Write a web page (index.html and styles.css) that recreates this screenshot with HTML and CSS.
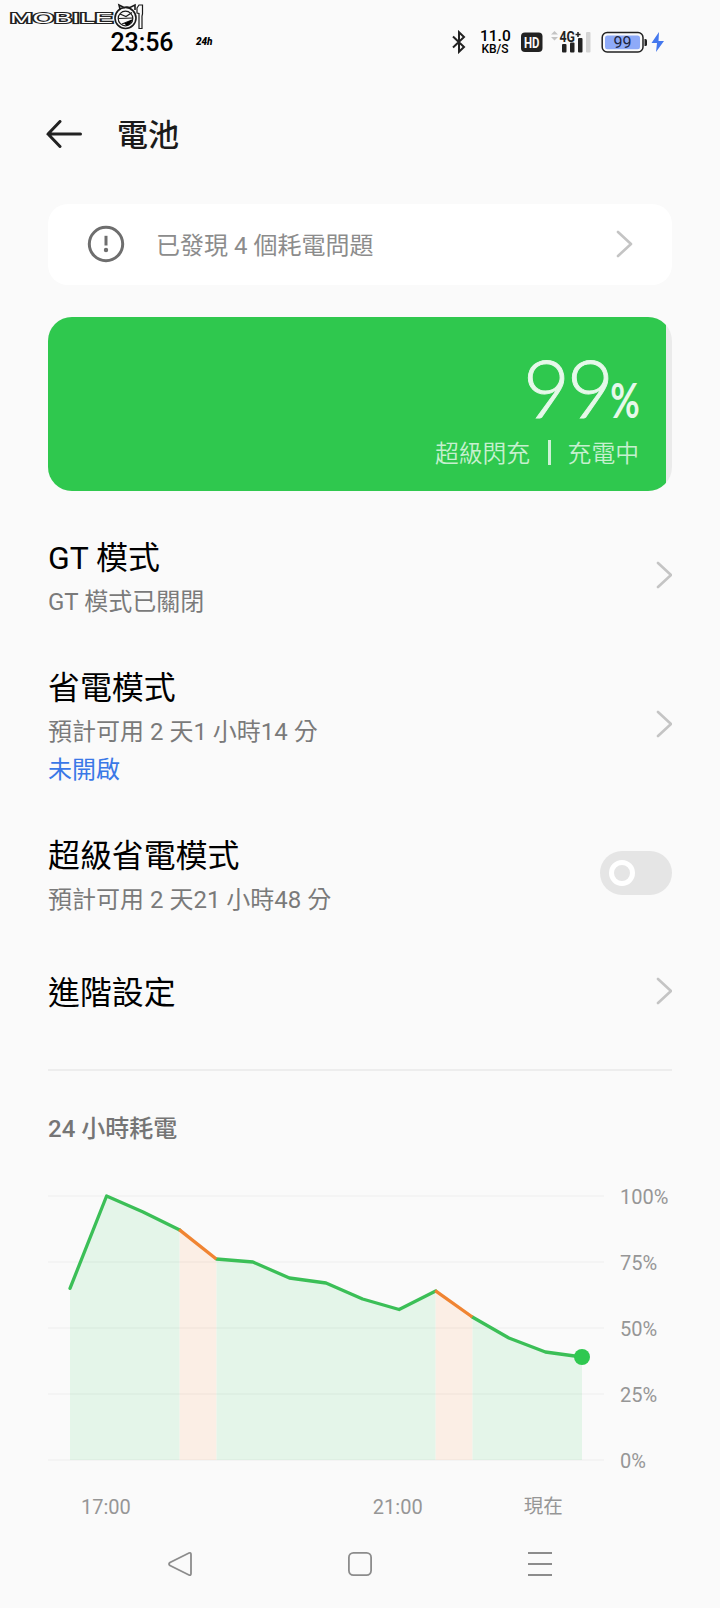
FILE: index.html
```
<!DOCTYPE html>
<html lang="zh-Hant">
<head>
<meta charset="utf-8">
<title>電池</title>
<link rel="stylesheet" href="styles.css">
</head>
<body>
<div class="screen">
  <svg class="watermark" width="150" height="34" viewBox="0 0 150 34">
    <text class="watermark-text" x="10" y="23" textLength="103" lengthAdjust="spacingAndGlyphs">MOBILE</text>
    <path class="wm-line" d="M120 9 L119 5 L124 7.500 Q127 6.500 130 7.500 L135 5 L135 10"/>
    <circle class="wm-line" cx="125.500" cy="18" r="10.500"/>
    <circle class="wm-line thin" cx="125.500" cy="18.500" r="7.300"/>
    <path class="wm-line thin" d="M120 14 L126 16.500 L132 12.500 M118.500 18.500 L133 18 M122 24 L132 20"/>
    <path d="M124 23.500 L132.500 19.500 Q130 25.500 126.500 25.500 Z"/>
    <path class="wm-line thin" d="M137 8 L139 5 L142.500 5 V14 L142 16 V28.500 L139 28.500 V13.500 L137 13 Z"/>
  </svg>

  <header class="status">
    <div class="status-left">
      <span class="clock">23:56</span>
      <span class="day">24h</span>
    </div>
    <div class="status-right">
      <svg class="bt" width="14" height="24" viewBox="0 0 14 24"><path d="M1 6.500 L12 17 L7 21.800 V2.200 L12 7 L1 17.500"/></svg>
      <div class="speed"><span class="speed-num">11.0</span><span class="speed-unit">KB/S</span></div>
      <svg class="hd" width="22" height="24" viewBox="0 0 22 24"><rect y="2.500" width="21.500" height="19.500" rx="4" fill="#222"/><text x="3" y="17.500" textLength="15.500" lengthAdjust="spacingAndGlyphs">HD</text></svg>
      <svg class="signal" width="42" height="24" viewBox="0 0 42 24">
        <path fill="#c4c4c4" d="M0 4.500 L3.500 1 L7 4.500 Z M0 7 L7 7 L3.500 10.500 Z"/>
        <text class="net" x="8.500" y="11.500" textLength="15.500" lengthAdjust="spacingAndGlyphs">4G</text>
        <path stroke="#222" stroke-width="1.500" d="M24.500 4.500 H29.500 M27 2 V7"/>
        <g fill="#222"><rect x="11" y="14" width="4.500" height="8.500" rx="1"/><rect x="19" y="12.500" width="4.500" height="10" rx="1"/><rect x="27" y="8" width="4.500" height="14.500" rx="1"/></g>
        <rect x="35" y="2" width="4.500" height="20.500" rx="1" fill="#d4d4d4"/>
      </svg>
      <svg class="batt" width="64" height="24" viewBox="0 0 64 24">
        <rect x="1.200" y="2.600" width="40.800" height="19.400" rx="5" fill="#fafafa" stroke="#222" stroke-width="1.500"/>
        <rect x="4" y="5.400" width="35" height="13.800" rx="2.500" fill="#8eaaf8"/>
        <path d="M43.500 9 H44.500 Q46 9 46 10.500 V14.500 Q46 16 44.500 16 H43.500 Z" fill="#222"/>
        <text class="batt-num" x="21.600" y="18" text-anchor="middle">99</text>
        <path d="M58 2 L50.500 13 H56 L55 22 L63 11 H57.500 Z" fill="#4478ee"/>
      </svg>
    </div>
  </header>

  <div class="titlebar">
    <svg width="36" height="28" viewBox="0 0 36 28"><path d="M34.500 14 H2 M14 1.500 L2 14 L14 26.500"/></svg>
    <h1>電池</h1>
  </div>

  <main>
    <section class="issue">
      <svg class="warn" width="38" height="38" viewBox="0 0 38 38"><circle cx="19" cy="19" r="16.700"/><path d="M19 10.800 V20.500"/><circle class="dot" cx="19" cy="25" r="2.200"/></svg>
      <span class="issue-text">已發現 4 個耗電問題</span>
      <svg class="chev" width="17" height="28" viewBox="0 0 17 28"><path d="M2 2 L15 14 L2 26"/></svg>
    </section>

    <section class="level">
      <div class="fill" style="width:618px"></div>
      <div class="level-info">
        <div class="percent"><span class="num">99</span><span class="sign">%</span></div>
        <div class="charge"><span>超級閃充</span><i></i><span>充電中</span></div>
      </div>
    </section>

    <ul class="list">
      <li class="row">
        <div><h2>GT 模式</h2><p>GT 模式已關閉</p></div>
        <svg class="chev" width="16" height="28" viewBox="0 0 16 28"><path d="M2 2 L15 14 L2 26"/></svg>
      </li>
      <li class="row">
        <div><h2>省電模式</h2><p>預計可用 2 天1 小時14 分</p><p class="link">未開啟</p></div>
        <svg class="chev" width="16" height="28" viewBox="0 0 16 28"><path d="M2 2 L15 14 L2 26"/></svg>
      </li>
      <li class="row">
        <div><h2>超級省電模式</h2><p>預計可用 2 天21 小時48 分</p></div>
        <span class="toggle"><b></b></span>
      </li>
      <li class="row last">
        <div><h2>進階設定</h2></div>
        <svg class="chev" width="16" height="28" viewBox="0 0 16 28"><path d="M2 2 L15 14 L2 26"/></svg>
      </li>
    </ul>

    <section class="usage">
      <h3>24 小時耗電</h3>
      <div class="chart">
        <div class="plot">
          <svg width="558" height="284" viewBox="48 1186 558 284">
            <g fill="#e4f5e9">
              <path d="M70 1460 V1288.400 L106.600 1196 L143.100 1212 L179.700 1230 V1460 Z"/>
              <path d="M216.300 1460 V1259 L252.900 1262 L289.400 1278 L326 1283 L362.600 1299 L399.100 1309.500 L435.700 1291 V1460 Z"/>
              <path d="M472.300 1460 V1317 L508.900 1338 L545.400 1352 L582 1357 V1460 Z"/>
            </g>
            <g fill="#fbeee5">
              <path d="M179.700 1460 V1230 L216.300 1259 V1460 Z"/>
              <path d="M435.700 1460 V1291 L472.300 1317 V1460 Z"/>
            </g>
            <path d="M48 1196 H604 M48 1262 H604 M48 1328 H604 M48 1394 H604 M48 1460 H604" stroke="#000" stroke-opacity=".03" stroke-width="1.500"/>
            <g fill="none" stroke="#3bbf57" stroke-width="3.300" stroke-linecap="round" stroke-linejoin="round">
              <path d="M70 1288.400 L106.600 1196 L143.100 1212 L179.700 1230"/>
              <path d="M216.300 1259 L252.900 1262 L289.400 1278 L326 1283 L362.600 1299 L399.100 1309.500 L435.700 1291"/>
              <path d="M472.300 1317 L508.900 1338 L545.400 1352 L582 1357"/>
              <path stroke="#f08432" stroke-linecap="butt" d="M179.200 1229.600 L216.300 1259 M435.200 1290.600 L472.300 1317"/>
            </g>
            <circle cx="582" cy="1357" r="8" fill="#2fc850"/>
          </svg>
          <div class="ylabels"><span>100%</span><span>75%</span><span>50%</span><span>25%</span><span>0%</span></div>
        </div>
        <div class="xlabels"><span>17:00</span><span>21:00</span><span class="now">現在</span></div>
      </div>
    </section>
  </main>

  <nav class="nav">
    <svg width="26" height="26" viewBox="0 0 26 26"><path d="M22 2 Q24 1.200 24 3.500 V22.500 Q24 24.800 22 24 L3 14.500 Q1 13 3 11.500 Z"/></svg>
    <svg width="26" height="26" viewBox="0 0 26 26"><rect x="1.900" y="1.900" width="22.200" height="22.200" rx="4.500"/></svg>
    <svg width="26" height="26" viewBox="0 0 26 26"><path class="bars" d="M1 2 H25 M1 13 H25 M1 24 H25"/></svg>
  </nav>
</div>
</body>
</html>
```
FILE: styles.css
```
* { box-sizing: border-box; margin: 0; padding: 0; }
body { background: #fafafa; font-family: Roboto, "Noto Sans CJK TC", sans-serif; color: #000; }
svg { display: block; flex: none; }
.screen { position: relative; width: 720px; height: 1608px; overflow: hidden; display: flex; flex-direction: column; }
.screen > * { flex: none; }

.watermark { position: absolute; left: 0; top: 0; overflow: visible; }
.watermark-text { font: 400 14px "Liberation Sans", sans-serif; fill: #fff; stroke: #222; stroke-width: 2.200; paint-order: stroke; }
.wm-line { fill: none; stroke: #1a1a1a; stroke-width: 1.600; }
.thin { stroke-width: 1.200; }

.status { height: 68px; padding: 30px 55px 0 110.500px; display: flex; justify-content: space-between; align-items: flex-start; }
.status-left { display: flex; }
.clock { font-size: 25px; line-height: 26px; font-weight: 500; width: 85.500px; letter-spacing: -.1px; }
.day { font: italic 900 10px/24px Roboto, sans-serif; letter-spacing: -.1px; }
.status-right { display: flex; }
.bt { margin-right: 14px; }
.bt path { fill: none; stroke: #222; stroke-width: 2; }
.speed { width: 30px; margin-right: 11px; text-align: center; font-weight: 500; display: flex; flex-direction: column; }
.speed-num { font-size: 15.500px; line-height: 13px; }
.speed-unit { font-size: 12px; line-height: 13px; }
.hd { margin-right: 8px; }
.hd text { fill: #fafafa; font: 700 15px Roboto, sans-serif; }
.signal { margin-right: 8px; }
.net { font: 700 14px Roboto, sans-serif; fill: #222; }
.batt-num { font: 400 16px Roboto, sans-serif; fill: #1c2540; }

.titlebar { height: 136px; padding-left: 46px; display: flex; align-items: center; gap: 35px; }
.titlebar svg { margin-bottom: 4px; }
.titlebar path { fill: none; stroke: #222; stroke-width: 3; stroke-linecap: round; }
h1 { font-size: 31px; line-height: 50px; font-weight: 500; color: #1a1a1a; }

main { padding: 0 48px; }
.issue { height: 80.500px; border-radius: 20px; background: #fff; padding: 0 39px 0 39px; display: flex; align-items: center; }
.warn { fill: none; stroke: #6e6e6e; stroke-width: 3; }
.warn .dot { fill: #6e6e6e; stroke: none; }
.issue-text { flex: 1; margin-left: 31px; font-size: 24px; line-height: 36px; padding-top: 3px; color: #8c8c8c; font-weight: 400; }
.chev { fill: none; stroke: #c4c4c4; stroke-width: 2.600; stroke-linecap: round; stroke-linejoin: round; }

.level { height: 174px; margin-top: 32px; border-radius: 24px; background: #ebebeb; overflow: hidden; display: grid; }
.fill { grid-area: 1 / 1; background: #2fc84e; }
.level-info { grid-area: 1 / 1; z-index: 1; padding: 29px 33px 0 0; display: flex; flex-direction: column; align-items: flex-end; color: #e6f8ea; }
.percent { display: flex; align-items: baseline; height: 89px; line-height: 82px; }
.num { font-family: Lato, sans-serif; font-size: 81px; font-weight: 300; letter-spacing: -3px; -webkit-text-stroke: .9px #e6f8ea; }
.sign { font-family: Lato, sans-serif; font-size: 48px; font-weight: 700; width: 28px; display: flex; justify-content: center; transform: scaleX(.75); }
.charge { display: flex; align-items: center; font-size: 23.800px; line-height: 38px; font-weight: 350; color: #c6f0cf; }
.charge i { width: 2.500px; height: 25px; margin: 0 17px 2px 18px; background: #cdf2d5; }

.list { list-style: none; padding-top: 21.500px; }
.row { display: flex; justify-content: space-between; align-items: center; padding: 21px 0; }
.row > :last-child { margin-bottom: 4px; }
h2 { font-size: 31.900px; line-height: 50px; font-weight: 400; }
.row p { font-size: 24px; line-height: 38px; color: #7a7a7a; font-weight: 400; }
.row p.link { color: #3a78e7; }
.row.last { padding: 28px 0 51px; }
.toggle { width: 72px; height: 44px; border-radius: 22px; background: #e5e5e5; display: flex; align-items: center; padding-left: 8.500px; }
.toggle b { width: 26px; height: 26px; border-radius: 50%; border: 5.500px solid #fff; }

.usage { border-top: 2px solid #ededed; padding-top: 38.500px; }
h3 { font-size: 24px; line-height: 38px; font-weight: 500; color: #757575; }
.chart { padding-top: 38px; }
.plot { display: flex; gap: 14px; }
.ylabels { height: 285px; padding-top: 1px; display: flex; flex-direction: column; justify-content: space-between; font-size: 20px; line-height: 20px; color: #969696; }
.xlabels { display: flex; height: 48px; padding: 21px 0 0 33px; font-size: 20px; line-height: 30px; gap: 242px; color: #969696; }
.xlabels .now { margin-left: -141px; font-size: 19.500px; }

.nav { margin-top: auto; height: 88px; display: flex; justify-content: center; gap: 154px; padding-top: 31px; }
.nav svg { fill: none; stroke: #8c8c8c; stroke-width: 1.800; }
.nav .bars { stroke-width: 2; }
```
